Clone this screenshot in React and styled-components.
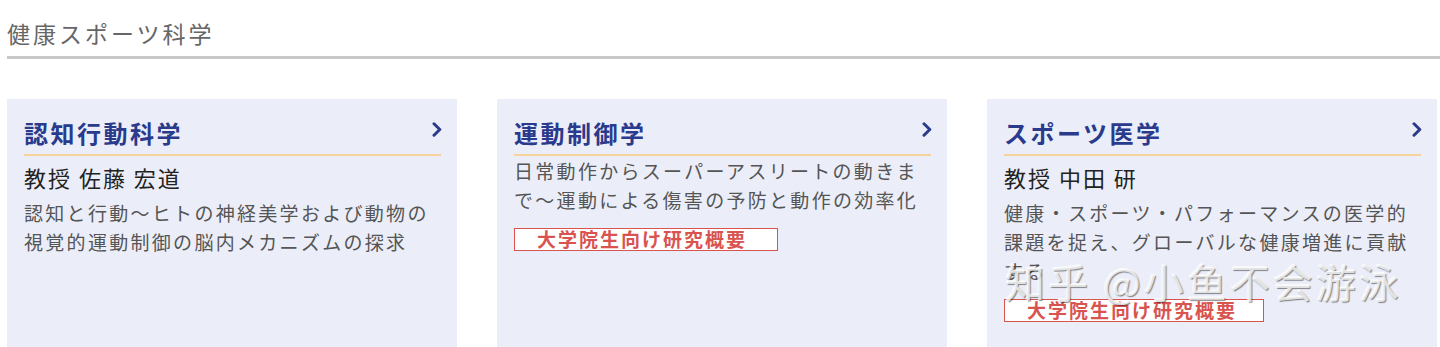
import React from "react";
import styled, { createGlobalStyle } from "styled-components";

const GlobalStyle = createGlobalStyle`
  html, body {
    margin: 0;
    padding: 0;
    background: #ffffff;
  }
  body {
    font-family: "Noto Sans CJK JP", "Noto Sans", sans-serif;
  }
`;

const Page = styled.div`
  position: relative;
  width: 1440px;
  height: 347px;
  overflow: hidden;
  padding-left: 7px;
  box-sizing: border-box;
`;

const SectionTitle = styled.h2`
  margin: 0;
  padding: 16px 0 6px;
  font-size: 23px;
  line-height: 34px;
  font-weight: 400;
  letter-spacing: 3px;
  color: #666666;
  border-bottom: 3px solid #c8c8c8;
`;

const CardRow = styled.div`
  display: grid;
  grid-template-columns: repeat(3, 450px);
  column-gap: 40px;
  margin-top: 40px;
`;

const CardStyled = styled.div`
  background-color: #ebeef8;
  min-height: 260px;
  padding: 17px 16px 0 17px;
  box-sizing: border-box;

  .header-card {
    display: flex;
    flex-direction: row;
    justify-content: space-between;
    align-items: flex-start;
    padding-bottom: 4px;
    border-bottom: 2px solid #f5d39a;
  }

  .title-card {
    margin: 0;
    font-size: 24px;
    line-height: 34px;
    font-weight: 700;
    letter-spacing: 2.5px;
    color: #2a3a8c;
  }

  .icon-card {
    margin-top: 6px;
    margin-right: -1px;
    width: 10px;
    height: 15px;
  }
`;

const Professor = styled.div`
  padding: 6px 0;
  font-size: 22px;
  line-height: 30px;
  letter-spacing: 2px;
  color: #222222;
`;

const Description = styled.p`
  margin: 0;
  font-size: 19px;
  line-height: 29px;
  letter-spacing: 2.3px;
  color: #555555;
`;

const Badge = styled.div`
  margin-top: 14px;
  width: ${props => props.width}px;
  height: 23px;
  box-sizing: border-box;
  padding-left: 22px;
  border: 1px solid #d9534f;
  background: #ffffff;
  color: #d9534f;
  font-size: 19px;
  line-height: 20px;
  font-weight: 700;
  letter-spacing: 2px;
  white-space: nowrap;
`;

const Watermark = styled.div`
  position: absolute;
  left: 1005px;
  top: 255px;
  font-family: "Noto Sans CJK SC", sans-serif;
  font-size: 40px;
  line-height: 52px;
  letter-spacing: 3px;
  color: rgba(255, 255, 255, 0.75);
  text-shadow: 1px 1px 1px rgba(0, 0, 0, 0.45), -1px -1px 0 rgba(255, 255, 255, 0.6);
  pointer-events: none;
  white-space: nowrap;
`;

const Chevron = () => (
  <svg className="icon-card" viewBox="0 0 10 15">
    <path
      d="M2 1.8 L7.8 7.5 L2 13.2"
      fill="none"
      stroke="#2a3a8c"
      strokeWidth="3"
      strokeLinecap="round"
      strokeLinejoin="round"
    />
  </svg>
);

const labs = [
  {
    title: "認知行動科学",
    professor: "教授 佐藤 宏道",
    description: "認知と行動〜ヒトの神経美学および動物の視覚的運動制御の脳内メカニズムの探求",
  },
  {
    title: "運動制御学",
    description: "日常動作からスーパーアスリートの動きまで〜運動による傷害の予防と動作の効率化",
    badge: true,
    badgeWidth: 264,
  },
  {
    title: "スポーツ医学",
    professor: "教授 中田 研",
    description: "健康・スポーツ・パフォーマンスの医学的課題を捉え、グローバルな健康増進に貢献する",
    badge: true,
    badgeWidth: 260,
  },
];

function Card({ lab }) {
  const { title, professor, description, badge, badgeWidth } = lab;
  return (
    <CardStyled>
      <div className="header-card">
        <h3 className="title-card">{title}</h3>
        <Chevron />
      </div>
      {professor && <Professor>{professor}</Professor>}
      <Description>{description}</Description>
      {badge && <Badge width={badgeWidth}>大学院生向け研究概要</Badge>}
    </CardStyled>
  );
}

export default function App() {
  return (
    <>
      <GlobalStyle />
      <Page>
        <SectionTitle>健康スポーツ科学</SectionTitle>
        <CardRow>
          {labs.map(lab => (
            <Card key={lab.title} lab={lab} />
          ))}
        </CardRow>
        <Watermark>知乎 @小鱼不会游泳</Watermark>
      </Page>
    </>
  );
}
